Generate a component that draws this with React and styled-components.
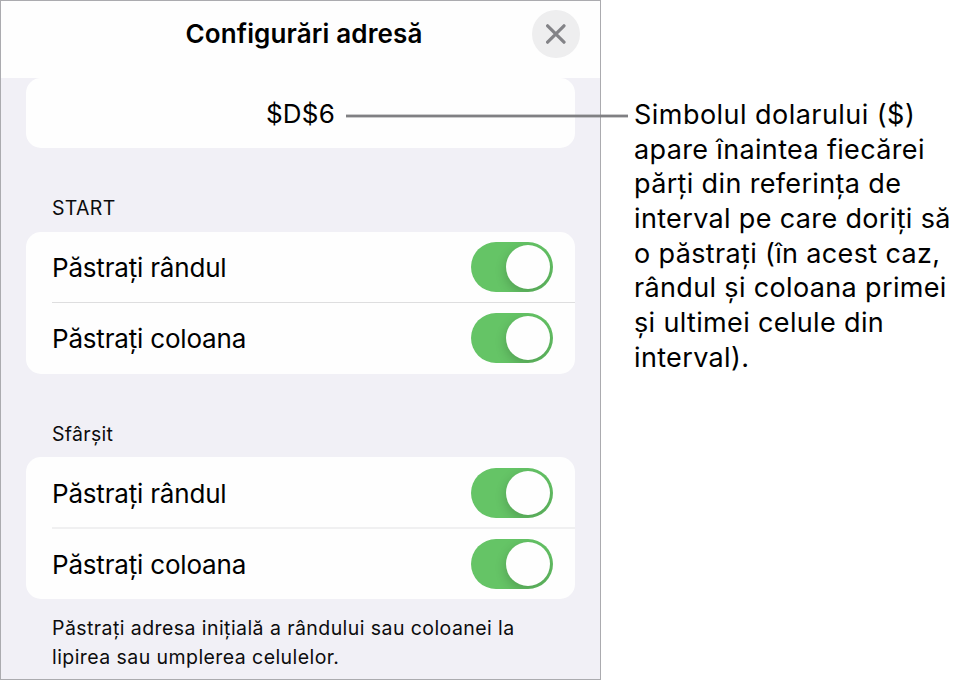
import React, { useState } from 'react';
import styled, { createGlobalStyle } from 'styled-components';

const SECTIONS = [
  {
    id: 'start',
    title: 'START',
    rows: ['Păstrați rândul', 'Păstrați coloana'],
  },
  {
    id: 'end',
    title: 'Sfârșit',
    rows: ['Păstrați rândul', 'Păstrați coloana'],
    softDivider: true,
  },
];

const NOTE_LINES = [
  'Simbolul dolarului ($)',
  'apare înaintea fiecărei',
  'părți din referința de',
  'interval pe care doriți să',
  'o păstrați (în acest caz,',
  'rândul și coloana primei',
  'și ultimei celule din',
  'interval).',
];

const ToggleRow = ({ label, softDivider }) => {
  const [isOn, setIsOn] = useState(true);

  return (
    <Row $soft={softDivider}>
      <RowLabel>{label}</RowLabel>
      <Toggle
        type="button"
        role="switch"
        aria-checked={isOn}
        aria-label={label}
        $on={isOn}
        onClick={() => setIsOn(!isOn)}
      >
        <Knob />
      </Toggle>
    </Row>
  );
};

const App = () => {
  return (
    <Page>
      <GlobalStyle />
      <Panel>
        <Header>
          <Title>Configurări adresă</Title>
          <CloseBtn type="button">
            <svg width="20" height="20" viewBox="0 0 20 20">
              <path
                d="M1.6 1.8 18 18.2M18 1.8 1.6 18.2"
                stroke="#838387"
                strokeWidth="3.2"
                strokeLinecap="round"
              />
            </svg>
          </CloseBtn>
        </Header>
        <Body>
          <AddressCard>
            <Address>$D$6</Address>
            <CalloutLine />
          </AddressCard>
          {SECTIONS.map((section) => (
            <Section key={section.id}>
              <SectionTitle>{section.title}</SectionTitle>
              <Card>
                {section.rows.map((label) => (
                  <ToggleRow
                    key={label}
                    label={label}
                    softDivider={section.softDivider}
                  />
                ))}
              </Card>
            </Section>
          ))}
          <Footer>
            Păstrați adresa inițială a rândului sau coloanei la
            <br />
            lipirea sau umplerea celulelor.
          </Footer>
        </Body>
      </Panel>
      <Note>
        {NOTE_LINES.map((line) => (
          <NoteLine key={line}>{line}</NoteLine>
        ))}
      </Note>
    </Page>
  );
};

export default App;

const GlobalStyle = createGlobalStyle`
  * {
    box-sizing: border-box;
  }

  body {
    margin: 0;
    background: #ffffff;
    color: #000000;
    font-family: Inter, 'Liberation Sans', sans-serif;
  }
`;

const Page = styled.div`
  display: flex;
  width: 959px;
  height: 681px;
  overflow: hidden;
`;

const Panel = styled.div`
  display: flex;
  flex-direction: column;
  flex-shrink: 0;
  width: 601px;
  height: 680px;
  border: 1px solid #ababaf;
  background-color: #f1f0f6;
`;

const Header = styled.div`
  display: grid;
  grid-template-columns: 68px 1fr 68px;
  height: 77px;
  padding-top: 9px;
  background-color: #fefefe;
`;

const Title = styled.div`
  grid-column: 2;
  height: 48px;
  padding-left: 7px;
  line-height: 47px;
  text-align: center;
  font-size: 26px;
  font-weight: 600;
  letter-spacing: 0.14px;
  white-space: nowrap;
`;

const CloseBtn = styled.button`
  display: flex;
  align-items: center;
  justify-content: center;
  width: 48px;
  height: 48px;
  padding: 0;
  border: none;
  border-radius: 50%;
  background-color: #eeeeef;
  cursor: pointer;
`;

const Body = styled.div`
  display: flex;
  flex-direction: column;
  padding: 0 25px 0 25px;
`;

const Card = styled.div`
  border-radius: 15px;
  background-color: #fefefe;
`;

const AddressCard = styled(Card)`
  position: relative;
  height: 70.2px;
`;

const Address = styled.div`
  line-height: 72px;
  text-align: center;
  font-size: 26px;
  letter-spacing: 0.2px;
`;

/* runs over the panel edge towards the note */
const CalloutLine = styled.div`
  position: absolute;
  left: 320px;
  top: 36px;
  width: 282px;
  height: 4px;
  border: solid rgba(128, 128, 131, 0.4);
  border-width: 1px 0;
  background-color: #808083;
  background-clip: padding-box;
`;

const Section = styled.div`
  height: 225.4px;
  padding-top: 47px;
`;

const SectionTitle = styled.div`
  height: 36.7px;
  padding-left: 26px;
  line-height: 27.4px;
  font-size: 19.5px;
  letter-spacing: 0.3px;
  color: #0c0c0d;
`;

const Row = styled.div`
  display: flex;
  align-items: center;
  justify-content: space-between;
  height: 71px;
  margin-left: 26px;
  padding-right: 22px;

  &:first-child {
    border-bottom: ${({ $soft }) => ($soft ? 'none' : '1px solid #dededf')};
  }

  &:last-child {
    box-shadow: ${({ $soft }) =>
      $soft ? '0 -1px 0 #f0f0f1, inset 0 1px 0 #f0f0f1' : 'none'};
  }
`;

const RowLabel = styled.div`
  padding-top: 1px;
  font-size: 26px;
  letter-spacing: -0.19px;
  white-space: nowrap;
`;

const Toggle = styled.button`
  display: flex;
  align-items: center;
  justify-content: ${({ $on }) => ($on ? 'flex-end' : 'flex-start')};
  width: 82px;
  height: 50px;
  padding: 0 3px;
  border: none;
  border-radius: 25px;
  background-color: ${({ $on }) => ($on ? '#65c466' : '#e9e9eb')};
  overflow: hidden;
  cursor: pointer;
`;

const Knob = styled.div`
  width: 44px;
  height: 44px;
  border-radius: 50%;
  background-color: #fefefe;
  box-shadow: 0 4px 12px rgba(0, 0, 0, 0.2);
`;

const Footer = styled.div`
  padding: 15px 0 0 26px;
  line-height: 29px;
  font-size: 19.5px;
  letter-spacing: 0.43px;
  color: #0c0c0d;
  white-space: nowrap;
`;

const Note = styled.div`
  padding: 97px 0 0 33px;
`;

const NoteLine = styled.div`
  height: 34.7px;
  line-height: 35px;
  font-size: 27px;
  letter-spacing: 0.35px;
  white-space: nowrap;

  &:first-child {
    letter-spacing: 0.46px;
  }
`;
